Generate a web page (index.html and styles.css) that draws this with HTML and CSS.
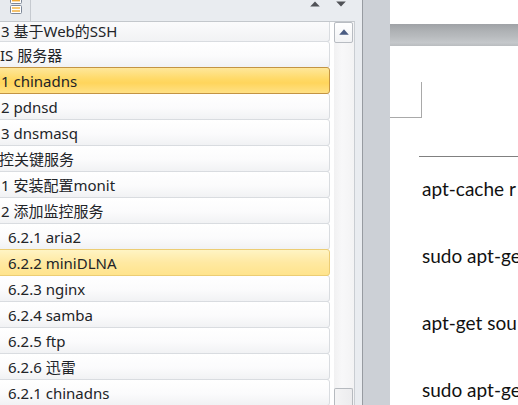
FILE: index.html
```html
<!DOCTYPE html>
<html lang="zh">
<head>
<meta charset="utf-8">
<title>导航</title>
<link rel="stylesheet" href="styles.css">
</head>
<body>
<div class="app">
  <aside class="nav">
    <div class="nav-head">
      <div class="tab">
        <svg class="tab-icon" width="12" height="14" viewBox="0 0 12 14">
          <rect x="0.5" y="-3.5" width="11" height="7" rx="1" fill="#fff" stroke="#7d8797"/>
          <rect x="2" y="0" width="8" height="1.4" fill="#f0a830"/>
          <rect x="0.5" y="5.5" width="11" height="8" rx="1" fill="#fff" stroke="#7d8797"/>
          <rect x="2" y="7.3" width="8" height="1.4" fill="#f5b43a"/>
          <rect x="2" y="10.3" width="8" height="1.4" fill="#f0a830"/>
        </svg>
      </div>
      <div class="head-arrows">
        <svg width="10" height="6" viewBox="0 0 10 6"><polygon points="5,0.5 9.8,5.5 0.2,5.5" fill="#505257"/></svg>
        <svg width="10" height="6" viewBox="0 0 10 6"><polygon points="0.2,0.5 9.8,0.5 5,5.5" fill="#505257"/></svg>
      </div>
    </div>
    <div class="listbox">
      <div class="rows">
        <div class="row first lv2">3 基于Web的SSH</div>
        <div class="row lv1">IS 服务器</div>
        <div class="row lv2 sel">1 chinadns</div>
        <div class="row lv2">2 pdnsd</div>
        <div class="row lv2">3 dnsmasq</div>
        <div class="row lv1b">控关键服务</div>
        <div class="row lv2">1 安装配置monit</div>
        <div class="row lv2">2 添加监控服务</div>
        <div class="row lv3">6.2.1 aria2</div>
        <div class="row lv3 hover">6.2.2 miniDLNA</div>
        <div class="row lv3">6.2.3 nginx</div>
        <div class="row lv3">6.2.4 samba</div>
        <div class="row lv3">6.2.5 ftp</div>
        <div class="row lv3">6.2.6 迅雷</div>
        <div class="row lv3">6.2.1 chinadns</div>
      </div>
      <div class="vscroll">
        <div class="sb-up">
          <svg width="10" height="6" viewBox="0 0 10 6"><polygon points="5,0.3 9.8,5.7 0.2,5.7" fill="#4a5c82"/></svg>
        </div>
        <div class="track"></div>
        <div class="thumb"></div>
      </div>
    </div>
  </aside>
  <div class="gutter"></div>
  <main class="doc">
    <div class="doc-bar"></div>
    <div class="corner"></div>
    <div class="rule"></div>
    <p class="line">apt-cache r</p>
    <p class="line">sudo apt-ge</p>
    <p class="line">apt-get sou</p>
    <p class="line">sudo apt-ge</p>
  </main>
</div>
</body>
</html>
```

FILE: styles.css
```css
* { box-sizing: border-box; }
html, body {
  margin: 0;
  padding: 0;
  width: 518px;
  height: 405px;
  overflow: hidden;
  background: #fff;
}
.app {
  display: flex;
  width: 518px;
  height: 405px;
}
.nav {
  width: 363px;
  flex: none;
  background: #e9ecf0;
  border-right: 1px solid #979ba1;
  display: flex;
  flex-direction: column;
}
.nav-head {
  height: 21px;
  flex: none;
  display: flex;
  align-items: flex-start;
}
.tab {
  width: 31px;
  height: 21px;
  border-right: 1px solid #c6cad0;
  background: #e7eaee;
  padding-left: 10px;
}
.tab-icon { display: block; }
.head-arrows {
  margin-left: auto;
  margin-right: 16px;
  margin-top: 1px;
  display: flex;
  gap: 16px;
}
.head-arrows svg { display: block; }
.listbox {
  flex: 1;
  width: 355px;
  display: flex;
  border-top: 1px solid #c3c7cc;
  border-right: 1px solid #c9cdd2;
  background: #fff;
  overflow: hidden;
}
.rows {
  width: 334px;
  flex: none;
  overflow: hidden;
  display: flex;
  flex-direction: column;
}
.row {
  flex: none;
  width: 334px;
  height: 27px;
  margin-left: -4px;
  margin-top: -1px;
  border: 1px solid #d9dce0;
  border-radius: 3px;
  background: linear-gradient(#ffffff, #fbfbfc 55%, #f1f2f4);
  font-family: "Noto Sans", "Noto Sans CJK SC", sans-serif;
  font-size: 15px;
  line-height: 20px;
  color: #222428;
  display: flex;
  align-items: center;
  white-space: nowrap;
  overflow: hidden;
  padding-top: 1px;
}
.row.first {
  margin-top: 0;
  height: 20px;
  border-top: none;
  border-radius: 0 0 3px 3px;
  background: linear-gradient(#fbfbfc, #f1f2f4);
  line-height: 17px;
  padding-top: 1px;
  padding-bottom: 1px;
}
.lv1 { padding-left: 3px; }
.lv1b { padding-left: 2px; }
.lv2 { padding-left: 4px; }
.lv3 { padding-left: 11px; }
.row.sel {
  position: relative;
  z-index: 1;
  border-color: #c39443;
  background: linear-gradient(#fee79a, #ffd966 45%, #ffd55c 60%, #ffe186);
}
.row.hover {
  position: relative;
  z-index: 1;
  border-color: #eccd74;
  background: linear-gradient(#fff4c4, #ffe9a2 50%, #ffe48c);
}
.vscroll {
  width: 20px;
  flex: none;
  display: flex;
  flex-direction: column;
  background: linear-gradient(90deg, #f1f1f2, #f8f8f9 40%, #f3f3f4);
}
.sb-up {
  width: 19px;
  height: 21px;
  border: 1px solid #b8bcc2;
  border-radius: 2px;
  background: linear-gradient(#ffffff, #f2f3f5);
  display: flex;
  align-items: center;
  justify-content: center;
  padding-bottom: 2px;
}
.sb-up svg { display: block; }
.track { flex: 1; }
.thumb {
  width: 19px;
  height: 17px;
  border: 1px solid #b6babf;
  border-bottom: none;
  border-radius: 2px 2px 0 0;
  background: linear-gradient(90deg, #f4f4f5, #ececee);
}
.gutter {
  width: 27px;
  flex: none;
  background: #ccd0d6;
}
.doc {
  flex: 1;
  background: #fff;
  overflow: hidden;
  padding-top: 24px;
}
.doc-bar {
  height: 22px;
  background: linear-gradient(#9fa2a6, #aeb1b4 30%, #b7babd 55%, #c5c8cb 85%, #b9bcbf);
}
.corner {
  margin-top: 36px;
  width: 32px;
  height: 36px;
  border-right: 1px solid #a9a9a9;
  border-bottom: 1px solid #a9a9a9;
}
.rule {
  margin-top: 38px;
  margin-left: 29px;
  height: 1px;
  background: #808080;
}
.line {
  margin: 20px 0 0 32px;
  height: 24px;
  line-height: 24px;
  font-family: Lato, "Noto Sans", sans-serif;
  font-size: 19px;
  color: #111;
  white-space: nowrap;
}
.line + .line { margin-top: 43px; }
```
